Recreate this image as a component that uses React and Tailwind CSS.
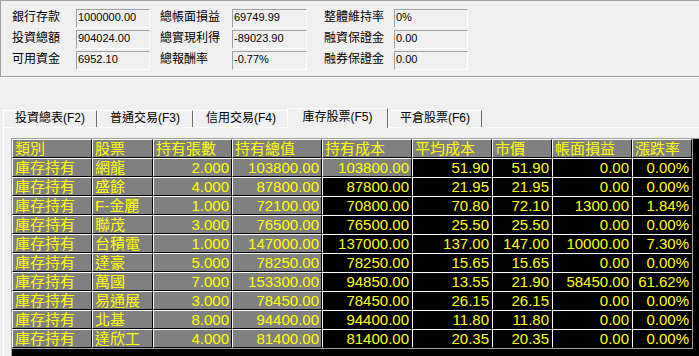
import React from "react";

const font = "font-['Liberation_Sans','Noto_Sans_CJK_TC',sans-serif]";

const summary = [
  ["銀行存款", "1000000.00", "總帳面損益", "69749.99", "整體維持率", "0%"],
  ["投資總額", "904024.00", "總實現利得", "-89023.90", "融資保證金", "0.00"],
  ["可用資金", "6952.10", "總報酬率", "-0.77%", "融券保證金", "0.00"],
];

const tabs = [
  { label: "投資總表(F2)", w: "w-[94px]" },
  { label: "普通交易(F3)", w: "w-[96px]" },
  { label: "信用交易(F4)", w: "w-[96px]" },
  { label: "庫存股票(F5)", w: "w-[101px]", active: true },
  { label: "平倉股票(F6)", w: "w-[94px]" },
];

const cols = [
  { title: "類別", w: "w-[80px]", right: false },
  { title: "股票", w: "w-[61px]", right: false },
  { title: "持有張數", w: "w-[79px]", right: true },
  { title: "持有總值", w: "w-[90px]", right: true },
  { title: "持有成本", w: "w-[90px]", right: true },
  { title: "平均成本", w: "w-[80px]", right: true },
  { title: "市價", w: "w-[60px]", right: true },
  { title: "帳面損益", w: "w-[80px]", right: true },
  { title: "漲跌率", w: "w-[60px]", right: true },
];

const rows = [
  ["庫存持有", "網龍", "2.000", "103800.00", "103800.00", "51.90", "51.90", "0.00", "0.00%"],
  ["庫存持有", "盛餘", "4.000", "87800.00", "87800.00", "21.95", "21.95", "0.00", "0.00%"],
  ["庫存持有", "F-金麗", "1.000", "72100.00", "70800.00", "70.80", "72.10", "1300.00", "1.84%"],
  ["庫存持有", "聯茂", "3.000", "76500.00", "76500.00", "25.50", "25.50", "0.00", "0.00%"],
  ["庫存持有", "台積電", "1.000", "147000.00", "137000.00", "137.00", "147.00", "10000.00", "7.30%"],
  ["庫存持有", "達豪", "5.000", "78250.00", "78250.00", "15.65", "15.65", "0.00", "0.00%"],
  ["庫存持有", "萬國", "7.000", "153300.00", "94850.00", "13.55", "21.90", "58450.00", "61.62%"],
  ["庫存持有", "易通展", "3.000", "78450.00", "78450.00", "26.15", "26.15", "0.00", "0.00%"],
  ["庫存持有", "北基", "8.000", "94400.00", "94400.00", "11.80", "11.80", "0.00", "0.00%"],
  ["庫存持有", "達欣工", "4.000", "81400.00", "81400.00", "20.35", "20.35", "0.00", "0.00%"],
];

const cellBase =
  "h-[19px] shrink-0 border border-t-white border-l-white border-r-black border-b-black leading-[17px] whitespace-nowrap overflow-hidden text-[#ffff00] text-[15px]";

const Field = ({ value, w }) => (
  <div
    className={`${w} h-[19px] border border-t-[#a0a0a0] border-l-[#a0a0a0] border-r-white border-b-white pl-[1px] text-[11px] leading-[15px] text-black`}>
    {value}
  </div>
);

export default function App() {
  return (
    <div className={`w-[699px] h-[356px] bg-[#f0f0f0] overflow-hidden flex flex-col ${font}`}>
      {/* Summary panel */}
      <div className="h-[77px] shrink-0 border-t border-l border-b border-[#a0a0a0] shadow-[0_1px_0_#ffffff] pt-[8px] pl-[11px] flex flex-col gap-[2px]">
        {summary.map((r) => (
          <div key={r[0]} className="flex items-center h-[19px]">
            <div className="w-[64px] text-[12px] text-black leading-[14px] -mt-[3px]">{r[0]}</div>
            <Field value={r[1]} w="w-[74px]" />
            <div className="w-[72px] ml-[10px] text-[12px] text-black leading-[14px] -mt-[3px]">{r[2]}</div>
            <Field value={r[3]} w="w-[75px]" />
            <div className="w-[70px] ml-[17px] text-[12px] text-black leading-[14px] -mt-[3px]">{r[4]}</div>
            <Field value={r[5]} w="w-[74px]" />
          </div>
        ))}
      </div>

      {/* Tabs */}
      <div className="mt-[30px] h-[20px] shrink-0 flex items-end pl-[3px]">
        {tabs.map((t) =>
          t.active ? (
            <div
              key={t.label}
              className={`${t.w} -ml-[2px] h-[20px] -mb-px relative z-10 bg-[#f0f0f0] border-t border-l border-r border-t-white border-l-white border-r-[#696969] text-[12px] text-black text-center leading-[16px]`}>
              {t.label}
            </div>
          ) : (
            <div
              key={t.label}
              className={`${t.w} h-[17px] bg-[#f0f0f0] border-t border-l border-r border-t-white border-l-white border-r-[#696969] text-[12px] text-black text-center leading-[15px]`}>
              {t.label}
            </div>
          )
        )}
      </div>

      {/* Tab panel */}
      <div className="flex-1 ml-[3px] border-t border-l border-white pl-[7px] pt-[10px] flex flex-col">
        <div className="flex-1 bg-black border-t border-l border-[#a0a0a0]">
          <div className="w-fit border-r border-b border-[#a0a0a0]">
            <div className="flex">
              {cols.map((c) => (
                <div key={c.title} className={`${c.w} ${cellBase} bg-[#808080] pl-[2px]`}>
                  {c.title}
                </div>
              ))}
            </div>
            {rows.map((r, ri) => (
              <div key={ri} className="flex">
                {r.map((v, ci) => {
                  const gray = ci < 4 || (ci === 4 && ri === 0);
                  return (
                    <div
                      key={ci}
                      className={`${cols[ci].w} ${cellBase} ${gray ? "bg-[#808080]" : "bg-black"} ${
                        cols[ci].right ? "text-right pr-[2px]" : "pl-[2px]"
                      }`}>
                      {v}
                    </div>
                  );
                })}
              </div>
            ))}
          </div>
        </div>
      </div>
    </div>
  );
}
